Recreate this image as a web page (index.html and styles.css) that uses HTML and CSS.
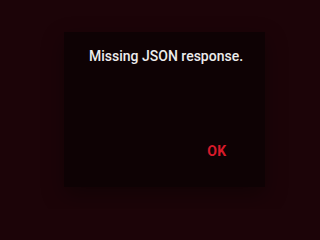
FILE: index.html
```html
<!DOCTYPE html>
<html>
<head>
<meta charset="utf-8">
<link rel="stylesheet" href="styles.css">
</head>
<body>
<div class="overlay">
  <div class="dialog">
    <div class="content">Missing JSON response.</div>
    <div class="actions">
      <button class="btn">OK</button>
    </div>
  </div>
</div>
</body>
</html>
```
FILE: styles.css
```css
html, body {
  margin: 0;
  padding: 0;
  width: 290px;
  height: 209px;
  overflow: hidden;
  background: #1c0408;
  font-family: Roboto, "Liberation Sans", sans-serif;
}
.overlay {
  padding: 32px 25px 0 64px;
}
.dialog {
  width: 201px;
  height: 155px;
  box-sizing: border-box;
  background: #0e0204;
  box-shadow: 0 8px 20px rgba(0,0,0,0.35);
  display: flex;
  flex-direction: column;
  justify-content: space-between;
}
.content {
  color: #ececec;
  font-size: 14px;
  font-weight: 500;
  line-height: 20px;
  white-space: nowrap;
  padding: 14px 0 0 25px;
}
.actions {
  display: flex;
  justify-content: flex-end;
  padding: 0 16px 18px 0;
}
.btn {
  background: none;
  border: none;
  min-width: 64px;
  height: 36px;
  padding: 0 8px;
  color: #d71a2a;
  font-family: Roboto, "Liberation Sans", sans-serif;
  font-size: 14px;
  font-weight: 700;
  letter-spacing: 0.5px;
}
```
